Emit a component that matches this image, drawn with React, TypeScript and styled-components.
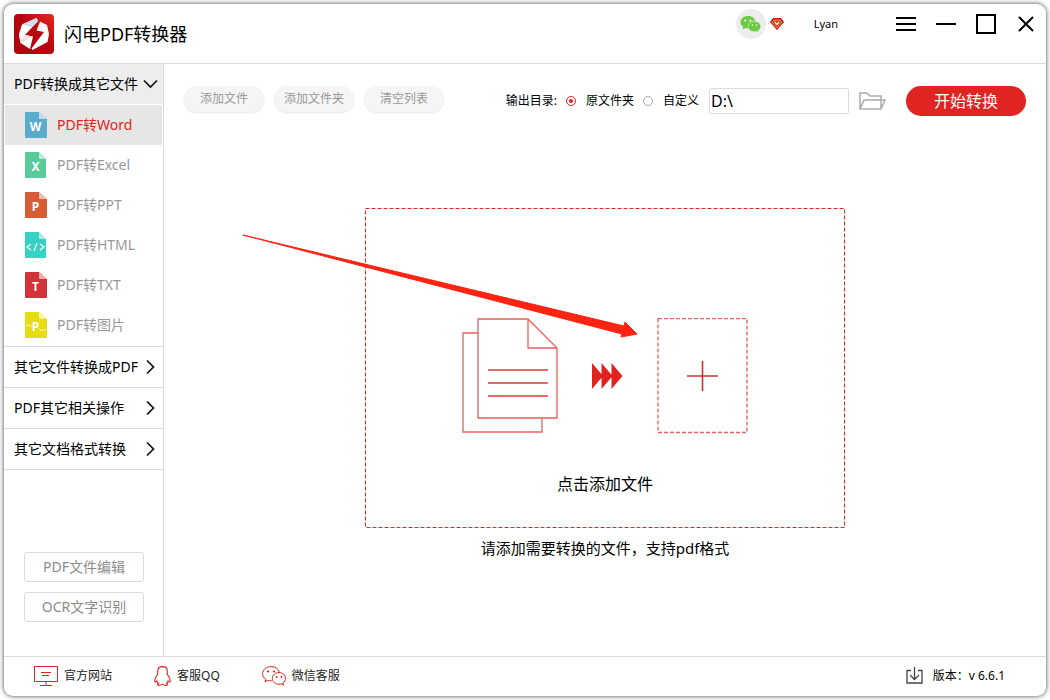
import React, { useState } from 'react';
import styled, { createGlobalStyle, css } from 'styled-components';

const RED = '#df2421';
const LINE = '#dcdcdc';

const GlobalStyle = createGlobalStyle`
  *, *::before, *::after { box-sizing: border-box; }
  html, body { margin: 0; padding: 0; background: #fff; }
  body, button, input {
    font-family: "Noto Sans", "Noto Sans CJK SC", sans-serif;
    font-weight: 400;
  }
  body { color: #000; font-size: 12px; line-height: 20px; }
  button { margin: 0; padding: 0; border: 0; background: none; color: inherit; line-height: 20px; cursor: pointer; }
  a { color: inherit; text-decoration: none; }
  svg { display: block; flex: none; }
`;

const Page = styled.div`
  display: flex;
  min-height: 100vh;
  padding: 4px;
`;

const Window = styled.div`
  flex: 1;
  min-width: 0;
  display: flex;
  flex-direction: column;
  background: #fff;
  border-radius: 9px;
  overflow: hidden;
  box-shadow: 0 0 5px rgba(0, 0, 0, 0.75);
`;

const Header = styled.header`
  display: flex;
  align-items: center;
  height: 60px;
  padding: 0 10px;
  border-bottom: 1px solid ${LINE};
`;

const Title = styled.h1`
  margin: 0 auto 0 10px;
  font-size: 18px;
  line-height: 24px;
  font-weight: 400;
  white-space: nowrap;
`;

const HeaderTools = styled.div`
  align-self: flex-start;
  display: flex;
  align-items: center;
  height: 40px;
`;

const Account = styled.div`
  display: flex;
  align-items: center;
  gap: 4px;
  margin-right: 58px;
`;

const Avatar = styled.span`
  display: grid;
  place-items: center;
  width: 30px;
  height: 30px;
  border-radius: 50%;
  background: #ededed;
`;

const UserName = styled.span`
  margin-left: 26px;
  font-size: 11px;
`;

const WindowControls = styled.div`
  display: flex;
  gap: 20px;
`;

const Body = styled.div`
  flex: 1;
  display: flex;
`;

const Sidebar = styled.nav`
  display: flex;
  flex-direction: column;
  flex: none;
  width: 160px;
  border-right: 1px solid ${LINE};
`;

const SectionButton = styled.button<{ $open?: boolean }>`
  display: flex;
  align-items: center;
  justify-content: space-between;
  width: 100%;
  height: 41px;
  padding: 0 4px 0 10px;
  font-size: 14px;
  white-space: nowrap;
  border-top: 1px solid ${LINE};
  ${({ $open }) =>
    $open &&
    css`
      height: 40px;
      border-top: 0;
      background: #ededed;
    `}
`;

const FormatList = styled.ul`
  margin: 0;
  padding: 1px 1px;
  list-style: none;
`;

const FormatButton = styled.button<{ $active: boolean }>`
  display: flex;
  align-items: center;
  gap: 10px;
  width: 100%;
  height: 40px;
  padding-left: 20px;
  font-size: 14px;
  color: ${({ $active }) => ($active ? RED : '#999')};
  background: ${({ $active }) => ($active ? '#e6e6e6' : 'transparent')};
`;

const SideEnd = styled.div`
  border-top: 1px solid ${LINE};
`;

const SideTools = styled.div`
  display: flex;
  flex-direction: column;
  gap: 10px;
  margin-top: auto;
  padding: 20px 19px 34px 20px;
`;

const OutlineButton = styled.button`
  height: 30px;
  border: 1px solid ${LINE};
  border-radius: 3px;
  font-size: 14px;
  color: #8c8c8c;
`;

const Main = styled.main`
  flex: 1;
  min-width: 0;
  display: flex;
  flex-direction: column;
  align-items: center;
`;

const Toolbar = styled.div`
  align-self: stretch;
  display: flex;
  align-items: center;
  gap: 10px;
  padding: 22px 20px 0;
`;

const FileActions = styled.div`
  align-self: flex-start;
  display: flex;
  gap: 10px;
  margin-right: auto;
`;

const PillButton = styled.button`
  width: 80px;
  height: 26px;
  border-radius: 13px;
  background: #f5f5f5;
  box-shadow: 0 1px 2px rgba(0, 0, 0, 0.1);
  color: #999;
  font-size: 12px;
`;

const OutputGroup = styled.div`
  display: flex;
  align-items: center;
  gap: 9px;
  white-space: nowrap;
`;

const RadioLabel = styled.label`
  display: flex;
  align-items: center;
  gap: 10px;
`;

const Radio = styled.input`
  appearance: none;
  display: grid;
  place-items: center;
  width: 10px;
  height: 10px;
  margin: 0;
  border: 1px solid #a6a6a6;
  border-radius: 50%;
  &:checked { border-color: ${RED}; }
  &:checked::before {
    content: '';
    width: 4px;
    height: 4px;
    border-radius: 50%;
    background: ${RED};
  }
`;

const PathInput = styled.input`
  width: 140px;
  height: 26px;
  padding: 0 1px;
  border: 1px solid ${LINE};
  border-radius: 2px;
  font-size: 16px;
  color: #000;
  outline: none;
`;

const StartButton = styled.button`
  width: 120px;
  height: 30px;
  margin-left: 10px;
  border-radius: 15px;
  background: ${RED};
  color: #fff;
  font-size: 16px;
`;

const DropArea = styled.div`
  position: relative;
  margin-top: 92px;
`;

const DropZone = styled.button`
  position: relative;
  display: flex;
  flex-direction: column;
  align-items: center;
  width: 480px;
  height: 320px;
  font-size: 16px;
`;

const DashedOutline = styled.svg`
  position: absolute;
  inset: 0;
`;

const DropFlow = styled.span`
  display: flex;
  align-items: center;
  gap: 34px;
  margin: 110px 0 40px;
`;

const Pointer = styled.svg`
  position: absolute;
  left: -125px;
  top: 20px;
  pointer-events: none;
`;

const Hint = styled.p`
  margin: 10px 0 0;
  font-size: 15px;
`;

const Footer = styled.footer`
  display: flex;
  align-items: center;
  gap: 42px;
  height: 40px;
  padding: 0 41px 2px 30px;
  border-top: 1px solid ${LINE};
`;

const FooterLink = styled.a`
  display: flex;
  align-items: center;
  gap: 6px;
  color: #222;
`;

const Version = styled.span`
  display: flex;
  align-items: center;
  gap: 10px;
  margin-left: auto;
  white-space: pre;
`;

const Logo = () => (
  <svg width="40" height="40" viewBox="0 0 40 40" aria-hidden="true">
    <defs>
      <linearGradient id="logoBg" x1="0" y1="1" x2="1" y2="0">
        <stop offset="0" stopColor="#a80310" />
        <stop offset="0.55" stopColor="#b80510" />
        <stop offset="1" stopColor="#e42a20" />
      </linearGradient>
      <linearGradient id="logoRight" x1="0" y1="0" x2="1" y2="1">
        <stop offset="0" stopColor="#f5d3d6" />
        <stop offset="0.5" stopColor="#fff" />
        <stop offset="1" stopColor="#fff" />
      </linearGradient>
      <linearGradient id="logoLeft" x1="0" y1="0" x2="1" y2="1">
        <stop offset="0" stopColor="#fff" />
        <stop offset="1" stopColor="#eeb9bf" />
      </linearGradient>
    </defs>
    <rect width="40" height="40" rx="4" fill="url(#logoBg)" />
    <path d="M8 10.500 22.500 4l1.500 3L11 21l8 1.500-3 12.500-9.500-6L5 20Z" fill="#fff" />
    <path d="M8 10.500 22.500 4l1.500 3-6 6Z" fill="#d2dff0" />
    <path d="m5 21 6 0 8 1.500L6.500 29Z" fill="url(#logoLeft)" />
    <path d="m26 7.500 7 3.500 2 9-1.500 8-15 8-1-1.500L30 18l-7.500-1.500Z" fill="url(#logoRight)" />
  </svg>
);

const ChevronDown = () => (
  <svg width="16" height="16" viewBox="0 0 16 16" fill="none" stroke="#111" strokeWidth="1.700" aria-hidden="true">
    <path d="m1 4.500 6.500 6.500L14 4.500" />
  </svg>
);

const ChevronRight = () => (
  <svg width="16" height="16" viewBox="0 0 16 16" fill="none" stroke="#111" strokeWidth="1.700" aria-hidden="true">
    <path d="m4 1.500 6.500 6.500L4 14.500" />
  </svg>
);

type Format = { name: string; mark: string; color: string; width: number };

const FileIcon = ({ mark, color, width }: Format) => (
  <svg width="22" height="26" viewBox="0 0 22 26" aria-hidden="true">
    <path d={`M1 0h13l${width - 14} 7v18a1 1 0 0 1-1 1H1a1 1 0 0 1-1-1V1a1 1 0 0 1 1-1Z`} fill={color} />
    <path d={`M14 0v6a1 1 0 0 0 1 1h${width - 15}Z`} fill="#fff" />
    <path d={`M14 0v6a1 1 0 0 0 1 1h${width - 15}Z`} fill={color} opacity="0.4" />
    {mark === '</>' ? (
      <path d="m6 12-4 3 4 3M12 11l-3 8M15 12l4 3-4 3" fill="none" stroke="#fff" strokeWidth="1.200" />
    ) : (
      <text x="10.500" y="19" textAnchor="middle" fontFamily="Noto Sans, sans-serif" fontSize="12" fontWeight="700" fill="#fff">
        {mark}
      </text>
    )}
    {color === '#e6dc12' && (
      <path d="M1 14c2-2 4-1 6 1M14 17c3 2 5 2 7 0" fill="none" stroke="#fff" strokeWidth="0.800" />
    )}
  </svg>
);

const WechatFilled = () => (
  <svg width="21" height="18" viewBox="0 0 21 18" aria-hidden="true">
    <path d="M8 1C3.600 1 .5 3.700.5 7.200c0 2 1 3.600 2.800 4.800L2.600 14.400l2.700-1.300c.9.2 1.700.4 2.700.4 4.400 0 7.500-2.800 7.500-6.300S12.400 1 8 1Z" fill="#6acb40" />
    <path d="M14.500 6.200c-3.600 0-6.300 2.300-6.300 5.300s2.700 5.300 6.300 5.300c.8 0 1.600-.1 2.300-.3l2.200 1.100-.6-2c1.500-1 2.400-2.400 2.400-4.100 0-3-2.700-5.300-6.300-5.300Z" fill="#6acb40" stroke="#ededed" strokeWidth="0.700" />
    <g fill="#fff">
      <circle cx="5.300" cy="5.500" r="1" />
      <circle cx="10.300" cy="5.500" r="1" />
      <circle cx="12.500" cy="10" r="0.800" />
      <circle cx="16.600" cy="10" r="0.800" />
    </g>
  </svg>
);

const VipGem = () => (
  <svg width="14" height="12" viewBox="0 0 14 12" aria-hidden="true">
    <path d="M3 0h8l3 4-7 8-7-8Z" fill="#c81414" />
    <path d="M3.800 2h6.400l1.600 2.200L7 9.800 2.200 4.200Z" fill="#d8321c" stroke="#f0a83c" strokeWidth="0.900" />
    <path d="m4.800 3.800 2.200 2.700 2.200-2.700" fill="none" stroke="#fff" strokeWidth="1.300" />
  </svg>
);

const FolderIcon = () => (
  <svg width="27" height="20" viewBox="0 0 27 20" fill="none" stroke="#aaa" strokeWidth="1.500" aria-hidden="true">
    <path d="M1 18V2h7l3 3h11v13H1l4-9h21l-4 9" />
  </svg>
);

const DocumentsIcon = () => (
  <svg width="96" height="116" viewBox="0 0 96 116" fill="none" stroke="#e8605e" strokeWidth="1.300" aria-hidden="true">
    <path d="M16 15H1v99h79v-14M16 1h50l29 29v70H16ZM66 1v29h29" />
    <path d="M26 52h60M26 65h60M26 78h60" stroke="#df3a38" />
  </svg>
);

const FastForward = () => (
  <svg width="31" height="26" viewBox="0 0 31 26" fill={RED} aria-hidden="true">
    <path d="M0 0 11 13 0 26ZM9.500 0l11 13-11 13ZM19.500 0l11 13-11 13Z" />
  </svg>
);

const AddBox = () => (
  <svg width="91" height="116" viewBox="0 0 91 116" fill="none" aria-hidden="true">
    <rect x="1" y="0.500" width="89" height="114" stroke="#dc6460" strokeWidth="1.300" strokeDasharray="4 2" />
    <path d="M30 58h31M45.500 43v30" stroke="#c93430" strokeWidth="1.600" />
  </svg>
);

const MonitorIcon = () => (
  <svg width="24" height="20" viewBox="0 0 24 20" fill="none" stroke={RED} aria-hidden="true">
    <path d="M.5.5h23v15H.5ZM12 16v3M6 19.500h12M7 6.500h10M8 9.500h7" />
  </svg>
);

const QQIcon = () => (
  <svg width="17" height="20" viewBox="0 0 17 20" fill="none" stroke={RED} strokeWidth="1.100" aria-hidden="true">
    <path d="M8.500.6C5.600.6 3.700 2.600 3.700 5.500v2.800C2.300 10 1 12 .8 14c-.1 1.200.1 2.200.6 2.200.5 0 1-.7 1.500-1.400.3 1 .8 1.700 1.500 2.400-.8.3-1 .8-.9 1.300.2.700 1.300.9 2.500.8 1-.1 1.900-.5 2.500-1.100.6.6 1.500 1 2.500 1.100 1.200.1 2.300-.1 2.500-.8.1-.5-.1-1-.9-1.300.7-.7 1.200-1.400 1.500-2.400.5.700 1 1.400 1.500 1.400.5 0 .7-1 .6-2.200-.2-2-1.500-4-2.900-5.700V5.500C13.300 2.600 11.400.6 8.500.6Z" />
  </svg>
);

const WechatOutline = () => (
  <svg width="24" height="20" viewBox="0 0 24 20" fill="none" stroke={RED} aria-hidden="true">
    <path d="M17.300 6C16.400 2.800 13.200.6 9.200.6 4.400.6.6 3.800.6 7.800c0 2.300 1.200 4.200 3.300 5.500l-.8 2.500 3-1.400c1 .3 2 .4 3.200.4h.6" />
    <path d="M17 6.500c-3.700 0-6.600 2.600-6.600 5.900 0 3.200 2.900 5.900 6.600 5.900.8 0 1.600-.1 2.300-.4l2.200 1.200-.6-2.100c1.600-1.100 2.600-2.700 2.600-4.600 0-3.300-2.900-5.900-6.500-5.900Z" />
    <g fill={RED} stroke="none">
      <circle cx="6" cy="5.500" r="1.100" />
      <circle cx="12" cy="5.500" r="1.100" />
      <circle cx="14.800" cy="11" r="0.900" />
      <circle cx="19.300" cy="11" r="0.900" />
    </g>
  </svg>
);

const DownloadIcon = () => (
  <svg width="17" height="17" viewBox="0 0 17 17" fill="none" stroke="#444" strokeWidth="1.300" aria-hidden="true">
    <path d="M5 3.500H1v12.500h15V3.500h-4" />
    <path d="M8.500 0v12M4 8l4.500 4.500L13 8" />
  </svg>
);

const formats: Format[] = [
  { name: 'PDF转Word', mark: 'W', color: '#5babcc', width: 22 },
  { name: 'PDF转Excel', mark: 'X', color: '#59cb9a', width: 21 },
  { name: 'PDF转PPT', mark: 'P', color: '#d55d35', width: 22 },
  { name: 'PDF转HTML', mark: '</>', color: '#36d3c4', width: 21 },
  { name: 'PDF转TXT', mark: 'T', color: '#d13338', width: 22 },
  { name: 'PDF转图片', mark: 'P', color: '#e6dc12', width: 22 },
];

const otherSections = ['其它文件转换成PDF', 'PDF其它相关操作', '其它文档格式转换'];

export default function App() {
  const [active, setActive] = useState('PDF转Word');
  const [path, setPath] = useState('D:\\');

  return (
    <Page>
      <GlobalStyle />
      <Window>
        <Header>
          <Logo />
          <Title>闪电PDF转换器</Title>
          <HeaderTools>
            <Account>
              <Avatar><WechatFilled /></Avatar>
              <VipGem />
              <UserName>Lyan</UserName>
            </Account>
            <WindowControls>
              <button aria-label="菜单">
                <svg width="20" height="20" stroke="#000" strokeWidth="2"><path d="M0 4h20M0 10h20M0 16h20" /></svg>
              </button>
              <button aria-label="最小化">
                <svg width="20" height="20" stroke="#000" strokeWidth="2"><path d="M0 10h20" /></svg>
              </button>
              <button aria-label="最大化">
                <svg width="20" height="20" stroke="#000" strokeWidth="2" fill="none"><path d="M1 1h18v18H1Z" /></svg>
              </button>
              <button aria-label="关闭">
                <svg width="20" height="20" stroke="#000" strokeWidth="2"><path d="m3 3 14 14M17 3 3 17" /></svg>
              </button>
            </WindowControls>
          </HeaderTools>
        </Header>

        <Body>
          <Sidebar>
            <SectionButton $open aria-expanded="true">
              PDF转换成其它文件
              <ChevronDown />
            </SectionButton>
            <FormatList>
              {formats.map((format) => (
                <li key={format.name}>
                  <FormatButton $active={format.name === active} onClick={() => setActive(format.name)}>
                    <FileIcon {...format} />
                    {format.name}
                  </FormatButton>
                </li>
              ))}
            </FormatList>
            {otherSections.map((name) => (
              <SectionButton key={name} aria-expanded="false">
                {name}
                <ChevronRight />
              </SectionButton>
            ))}
            <SideEnd />
            <SideTools>
              <OutlineButton>PDF文件编辑</OutlineButton>
              <OutlineButton>OCR文字识别</OutlineButton>
            </SideTools>
          </Sidebar>

          <Main>
            <Toolbar>
              <FileActions>
                <PillButton>添加文件</PillButton>
                <PillButton>添加文件夹</PillButton>
                <PillButton>清空列表</PillButton>
              </FileActions>
              <OutputGroup role="radiogroup" aria-labelledby="output-label">
                <span id="output-label">输出目录:</span>
                <RadioLabel>
                  <Radio type="radio" name="output" defaultChecked />
                  原文件夹
                </RadioLabel>
                <RadioLabel>
                  <Radio type="radio" name="output" />
                  自定义
                </RadioLabel>
              </OutputGroup>
              <PathInput aria-label="输出目录" value={path} onChange={(e) => setPath(e.target.value)} />
              <button aria-label="选择文件夹"><FolderIcon /></button>
              <StartButton>开始转换</StartButton>
            </Toolbar>

            <DropArea>
              <DropZone>
                <DashedOutline width="480" height="320" fill="none" aria-hidden="true">
                  <rect x="0.500" y="0.500" width="479" height="319" stroke={RED} strokeDasharray="4 2" />
                </DashedOutline>
                <DropFlow>
                  <DocumentsIcon />
                  <FastForward />
                  <AddBox />
                </DropFlow>
                点击添加文件
              </DropZone>
              <Pointer width="400" height="112" viewBox="0 0 400 112" aria-hidden="true">
                <path d="M3 7 384 98l1-4 12 12-16 3 1-3Z" fill="#ff2312" stroke="#ff2312" />
              </Pointer>
            </DropArea>
            <Hint>请添加需要转换的文件，支持pdf格式</Hint>
          </Main>
        </Body>

        <Footer>
          <FooterLink href="#site"><MonitorIcon />官方网站</FooterLink>
          <FooterLink href="#qq"><QQIcon />客服QQ</FooterLink>
          <FooterLink href="#wechat"><WechatOutline />微信客服</FooterLink>
          <Version><DownloadIcon />版本：v 6.6.1</Version>
        </Footer>
      </Window>
    </Page>
  );
}
